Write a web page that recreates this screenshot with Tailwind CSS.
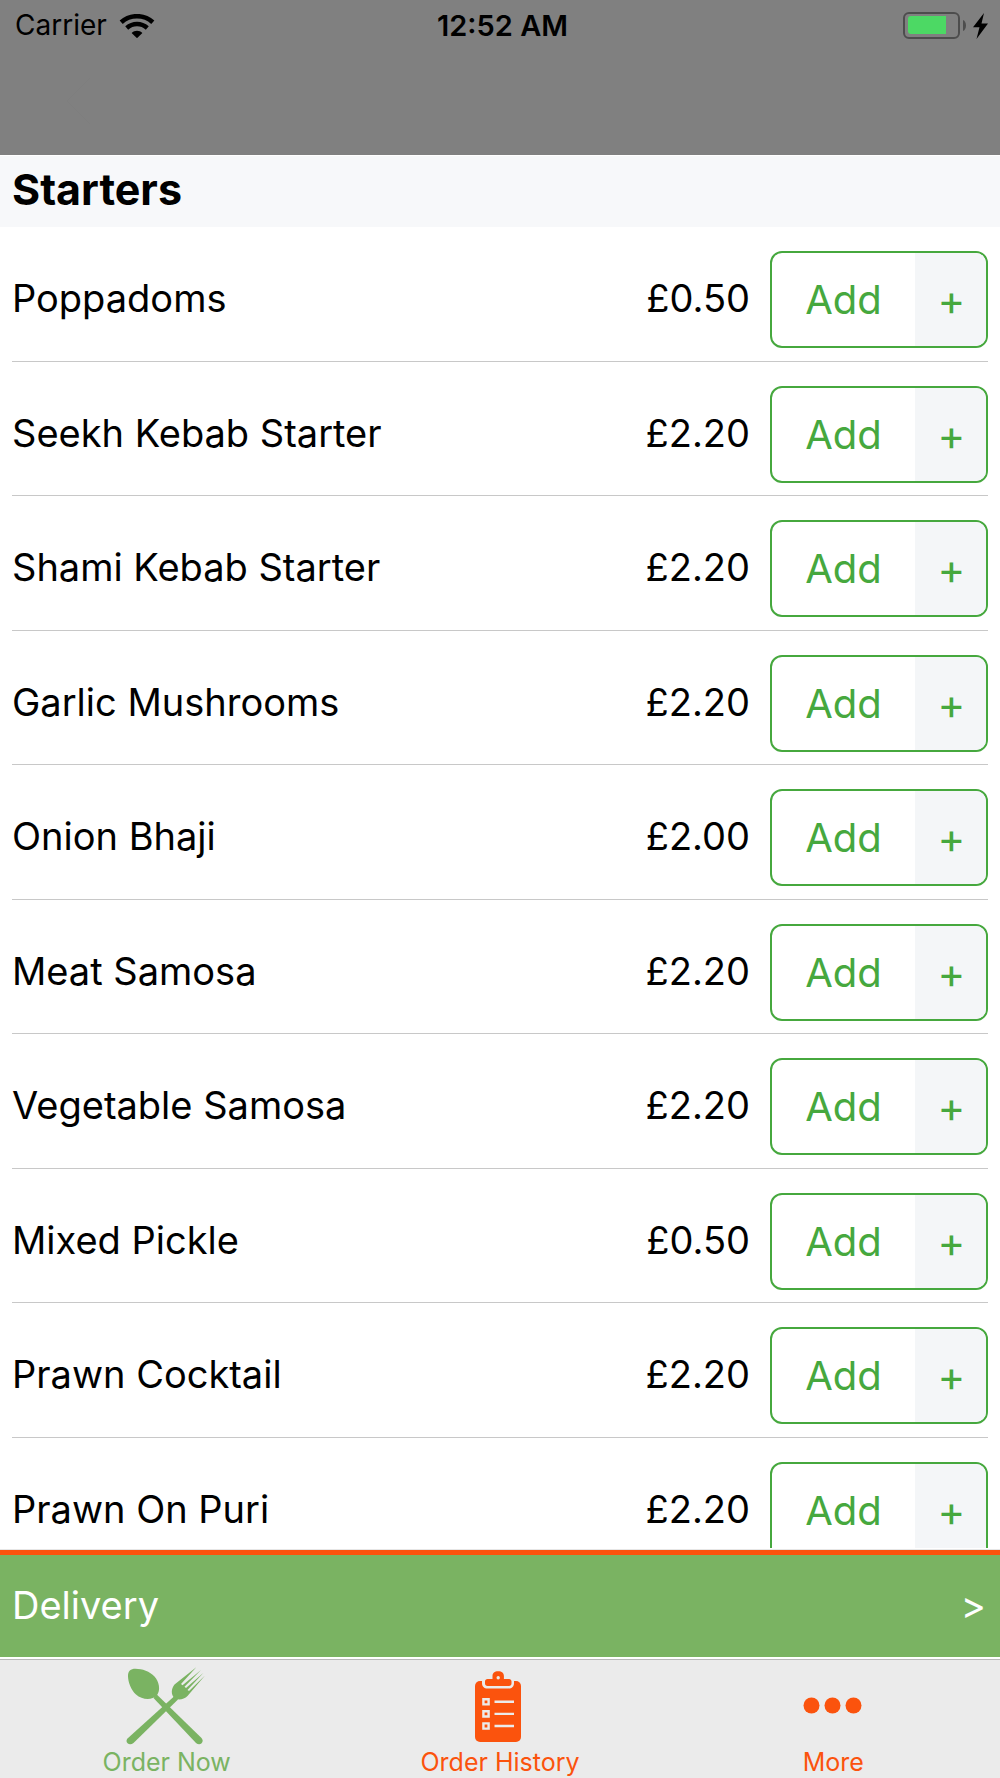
<!DOCTYPE html>
<html lang="en">
<head>
<meta charset="utf-8">
<meta name="viewport" content="width=device-width, initial-scale=1">
<title>Starters</title>
<script src="https://cdn.jsdelivr.net/npm/@tailwindcss/browser@4"></script>
</head>
<body class="flex h-screen flex-col overflow-hidden bg-white font-['Inter',sans-serif] text-black">

<header class="h-[155px] shrink-0 bg-[#808080]">
  <div class="grid h-[51px] grid-cols-3 items-center pr-[10px] pl-[15px] text-[28px] leading-[51px]">
    <div class="flex items-center gap-3">
      <span>Carrier</span>
      <svg class="h-6 w-[36px]" viewBox="0 0 36 24" fill="none" stroke="#000" aria-label="Wi-Fi">
        <path d="M2.2 8.2C11 .2 25 .2 33.800 8.200" stroke-width="4.600"/>
        <path d="M7.700 14C13.700 8.600 22.300 8.600 28.300 14" stroke-width="4.400"/>
        <path d="M12.600 19C15.600 16 20.400 16 23.400 19L18 24.200Z" fill="#000" stroke="none"/>
      </svg>
    </div>
    <div class="text-center text-[29px] font-semibold whitespace-nowrap">12:52 AM</div>
    <div class="flex justify-end">
      <svg class="h-[28px] w-[87px]" viewBox="0 0 87 28" aria-label="Battery charging">
        <rect x="1" y="1" width="55" height="25" rx="5" fill="none" stroke="#4d4d4d" stroke-width="2"/>
        <path d="M8 4H43V22H8C6 22 5 21 5 19V7C5 5 6 4 8 4Z" fill="#4cd964"/>
        <path d="M60 8C64 9.500 64 17.500 60 19Z" fill="#4d4d4d"/>
        <path d="M81 1L70 15.200H76.500L73.500 27L85 11.500H78.500Z" fill="#000"/>
      </svg>
    </div>
  </div>
  <div class="mr-[2px] ml-[60px] flex h-[100px] items-center text-[#7e7e7e]">
    <button class="h-12" aria-label="Back">
      <svg class="h-12 w-8" viewBox="0 0 32 48" fill="none" stroke="#7e7e7e"><path d="M30 1L7 24L30 47"/></svg>
    </button>
  </div>
</header>

<main class="flex min-h-0 flex-1 flex-col overflow-hidden">
  <h1 class="h-[72px] shrink-0 border-t border-white bg-[#f7f8fa] px-3 text-[43px] leading-[66px] font-bold">Starters</h1>
  <ul id="menu" class="min-h-0 flex-1 overflow-hidden px-3"></ul>
</main>

<button class="mt-[2px] flex h-[107px] shrink-0 items-center justify-between border-t-[5px] border-[#fb530d] bg-[#7ab362] pr-[14px] pb-[2px] pl-3 text-[38px] text-white shadow-[0_-1px_0_#e6e6e6]">
  <span>Delivery</span>
  <span>&gt;</span>
</button>

<nav class="mt-[2px] grid h-[119px] shrink-0 grid-cols-3 border-t border-[#b8b8b8] bg-[#ebebeb] text-[25px] leading-8 text-[#fb530d]">
  <a href="#order" class="flex flex-col items-center text-[#7ab362]">
    <svg class="size-[86px]" viewBox="0 0 86 86" fill="#7ab362" aria-hidden="true">
      <path d="M4 16C4 11 6.500 8.800 11.500 8.800C18 8.800 26 11.500 30.500 16.500C35 21.500 37 30 32.800 35.500C28 40.500 18 40 12 34.500C7 30 4 22 4 16Z"/>
      <path d="M29.500 38L32.800 34.500L77.500 78C81 82 76 86.500 72 83Z"/>
      <path d="M50.500 36L54 39.500L9.500 83C5 86.500 .5 82 3.500 78.500Z"/>
      <path d="M72.300 7.200L50.500 24.500C47 29 47 34.500 50 37.500C53.500 41 60 39.500 63.500 36L81 15.500L65 31L63.500 30L79.500 12.800L62 28L60.500 26.800L77 10L58.500 25.200L57 23.900Z"/>
    </svg>
    <span>Order Now</span>
  </a>
  <a href="#history" class="flex flex-col items-center">
    <svg class="size-[86px]" viewBox="0 0 86 86" aria-hidden="true">
      <rect x="18" y="21" width="46" height="61" rx="5" fill="#fb530d"/>
      <path d="M25 16V23C25 26.500 27 28.500 30.500 28.500H51.500C55 28.500 57 26.500 57 23V16Z" fill="#ebebeb"/>
      <path fill-rule="evenodd" d="M28 21.500C28 20 29 19 30.500 19H35.500V16C35.500 13 37.500 11.200 41.200 11.200C44.900 11.200 46.900 13 46.900 16V19H52C53.500 19 54.500 20 54.500 21.500V23.500C54.500 25 53.500 26 52 26H30.500C29 26 28 25 28 23.500ZM41.200 16A1.700 1.700 0 1 0 41.200 19.400A1.700 1.700 0 1 0 41.200 16Z" fill="#fb530d"/>
      <g fill="none" stroke="#ebebeb" stroke-width="2.400">
        <path d="M26.400 39.200h5.200v5.200h-5.200ZM26.400 51.300h5.200v5.200h-5.200ZM26.400 63.400h5.200v5.200h-5.200Z"/>
        <path d="M37.500 41.800H57M37.500 53.900H57M37.500 66H57"/>
      </g>
    </svg>
    <span>Order History</span>
  </a>
  <a href="#more" class="flex flex-col items-center">
    <svg class="size-[86px]" viewBox="0 0 86 86" fill="#fb530d" aria-hidden="true">
      <circle cx="21.500" cy="45.500" r="8"/><circle cx="42.500" cy="45.500" r="8"/><circle cx="63.500" cy="45.500" r="8"/>
    </svg>
    <span>More</span>
  </a>
</nav>

<script>
const items = [
  ['Poppadoms', '0.50'], ['Seekh Kebab Starter', '2.20'], ['Shami Kebab Starter', '2.20'],
  ['Garlic Mushrooms', '2.20'], ['Onion Bhaji', '2.00'], ['Meat Samosa', '2.20'],
  ['Vegetable Samosa', '2.20'], ['Mixed Pickle', '0.50'], ['Prawn Cocktail', '2.20'], ['Prawn On Puri', '2.20'],
];
document.getElementById('menu').innerHTML = items.map(([name, price]) => `
  <li class="flex h-[135px] items-start border-b border-[#c8c8c8] pt-6 text-[38px] leading-[94px] even:h-[134px]">
    <span class="flex-1">${name}</span>
    <span class="mr-5">£${price}</span>
    <button class="flex h-[97px] w-[218px] overflow-hidden rounded-xl border-2 border-[#46a83e] text-[40px] leading-[94px] text-[#46a83e]" aria-label="Add ${name}">
      <span class="flex-1">Add</span>
      <span class="w-[71px] bg-[#f4f6f8] pl-[2px] text-[42px]">+</span>
    </button>
  </li>`).join('');
</script>
</body>
</html>
